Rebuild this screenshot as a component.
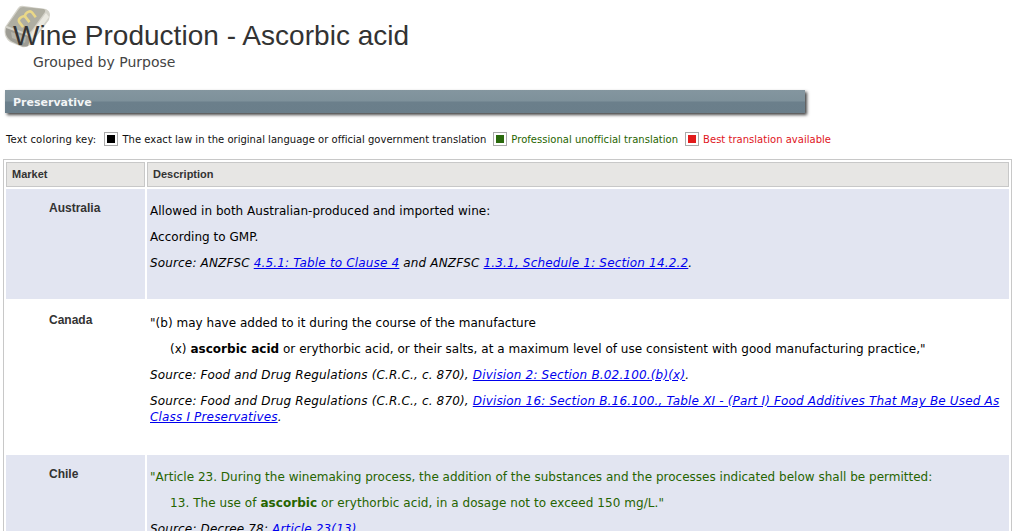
<div class="page">
  <header class="head">
    <svg class="book" viewBox="0 0 50 46" aria-hidden="true">
      <path d="M3 24 L16 5 Q18 2 22 3 L44 6 Q48 8 48 12 L47 17 L28 42 Q24 45 20 44 L8 39 Q1 34 3 24Z" fill="#c9c7bc"/>
      <path d="M5 23 L17 6 Q18 4 21 4 L42 6 Q44 7 43 9 L30 27 Q28 30 24 30 Z" fill="#9c9a8c"/>
      <path d="M30 29 L44 10 L47 14 L31 36 Q27 33 30 29Z" fill="#e6e4da"/>
      <path d="M4 25 L24 32 Q28 33 28 37 L26 43 Q22 44 19 43 L9 38 Q2 33 4 25Z" fill="#85847a"/>
      <path d="M9 29 L24 34 L23 40 L10 35Z" fill="#a3a297"/>
      <g transform="translate(25 16) rotate(-38)">
        <path d="M-8 4 V-2 Q-8 -5 -4 -5 Q0 -5 0 -2 V4 M0 -2 Q0 -5 4 -5 Q8 -5 8 -2 V4" fill="none" stroke="#e6cf6a" stroke-width="2.6"/>
      </g>
    </svg>
    <h1>Wine Production - Ascorbic acid</h1>
    <h2>Grouped by Purpose</h2>
  </header>

  <div class="bar">Preservative</div>

  <div class="key">
    <span class="key-label">Text coloring key:</span>
    <span class="swatch first"><i class="black"></i></span><span>The exact law in the original language or official government translation</span>
    <span class="swatch"><i class="green"></i></span><span class="t-green">Professional unofficial translation</span>
    <span class="swatch"><i class="red"></i></span><span class="t-red">Best translation available</span>
  </div>

  <div class="frame">
    <table>
      <thead>
        <tr><th class="c1">Market</th><th>Description</th></tr>
      </thead>
      <tbody>
        <tr class="shade r1">
          <td class="market">Australia</td>
          <td class="desc">
            <p>Allowed in both Australian-produced and imported wine:</p>
            <p>According to GMP.</p>
            <p class="src">Source: ANZFSC <a href="#a">4.5.1: Table to Clause 4</a> and ANZFSC <a href="#a">1.3.1, Schedule 1: Section 14.2.2</a>.</p>
          </td>
        </tr>
        <tr class="r2">
          <td class="market">Canada</td>
          <td class="desc">
            <p>"(b) may have added to it during the course of the manufacture</p>
            <p class="ind">(x) <b>ascorbic acid</b> or erythorbic acid, or their salts, at a maximum level of use consistent with good manufacturing practice,"</p>
            <p class="src">Source: Food and Drug Regulations (C.R.C., c. 870), <a href="#a">Division 2: Section B.02.100.(b)(x)</a>.</p>
            <p class="src">Source: Food and Drug Regulations (C.R.C., c. 870), <a href="#a">Division 16: Section B.16.100., Table XI - (Part I) Food Additives That May Be Used As Class I Preservatives</a>.</p>
          </td>
        </tr>
        <tr class="shade">
          <td class="market">Chile</td>
          <td class="desc">
            <p class="t-green tight">"Article 23. During the winemaking process, the addition of the substances and the processes indicated below shall be permitted:</p>
            <p class="ind t-green loose">13. The use of <b>ascorbic</b> or erythorbic acid, in a dosage not to exceed 150 mg/L."</p>
            <p class="src">Source: Decree 78: <a href="#a">Article 23(13)</a></p>
          </td>
        </tr>
      </tbody>
    </table>
  </div>
</div>

<style>
  :global(html), :global(body) { margin: 0; height: 531px; overflow: hidden; background: #fff; }
  .page { font-family: "DejaVu Sans", Verdana, sans-serif; color: #000; }
  .head { position: relative; padding: 20px 0 0 13px; height: 72px; box-sizing: border-box; }
  .book { position: absolute; left: 2px; top: 3px; width: 50px; height: 46px; opacity: .8; }
  h1 { position: relative; margin: 0; font: 400 28px/32px "Liberation Sans", Arial, sans-serif; letter-spacing: .03px; color: #333; }
  h2 { margin: 1px 0 0 20px; font: 400 14px/18px "DejaVu Sans", Verdana, sans-serif; color: #444; }
  .bar {
    margin: 18px 0 0 5px; width: 800px; height: 23px; box-sizing: border-box;
    padding: 6px 0 0 8px; font-size: 11px; line-height: 14px; font-weight: 700; color: #f2f4f5;
    background: linear-gradient(#84969f 0, #7e919b 11px, #6b7f8b 12px, #6a7e8a 100%);
    box-shadow: 2px 2px 3px #444;
  }
  .key { display: flex; align-items: center; margin: 17px 0 0 6px; height: 18px; font-size: 10px; letter-spacing: .02px; color: #111; white-space: nowrap; }
  .key-label { margin-right: 8px; letter-spacing: .2px; }
  .swatch { width: 14px; height: 14px; box-sizing: border-box; border: 1px solid #aaa; padding: 2px; margin: 0 4px 0 7px; }
  .swatch.first { margin-left: 0; }
  .swatch i { display: block; width: 8px; height: 8px; }
  .black { background: #000; }
  .green { background: #2a6a0c; }
  .red { background: #e21c1c; }
  .t-green { color: #266400; }
  .t-red { color: #e0141c; }
  .frame { margin: 11px 3px 0 3px; border: 1px solid #c8c8c8; }
  table { width: 100%; border-collapse: separate; border-spacing: 2px; table-layout: fixed; }
  th {
    height: 25px; box-sizing: border-box; padding: 0 0 2px 5px; text-align: left;
    font: 700 11px/14px "Liberation Sans", Arial, sans-serif; color: #333;
    background: #e7e6e4; border: 1px solid #c8c8c8;
  }
  .c1 { width: 139px; }
  td { padding: 0; vertical-align: top; }
  .shade td { background: #e2e5f1; }
  .market { font: 700 12px/14px "Liberation Sans", Arial, sans-serif; color: #333; padding: 12px 0 0 43px; }
  .desc { font-size: 12px; line-height: 16px; letter-spacing: .025px; padding: 4px 4px 0 3px; }
  .desc p { margin: 10px 0; }
  .desc .src { font-style: italic; letter-spacing: .15px; }
  .desc .src a { letter-spacing: .17px; }
  .desc .tight { letter-spacing: .01px; }
  .desc .loose { letter-spacing: .06px; }
  .ind { padding-left: 20px; }
  .r1 td { height: 110px; box-sizing: border-box; }
  .r2 td { height: 152px; box-sizing: border-box; }
  a { color: #00e; }
</style>
